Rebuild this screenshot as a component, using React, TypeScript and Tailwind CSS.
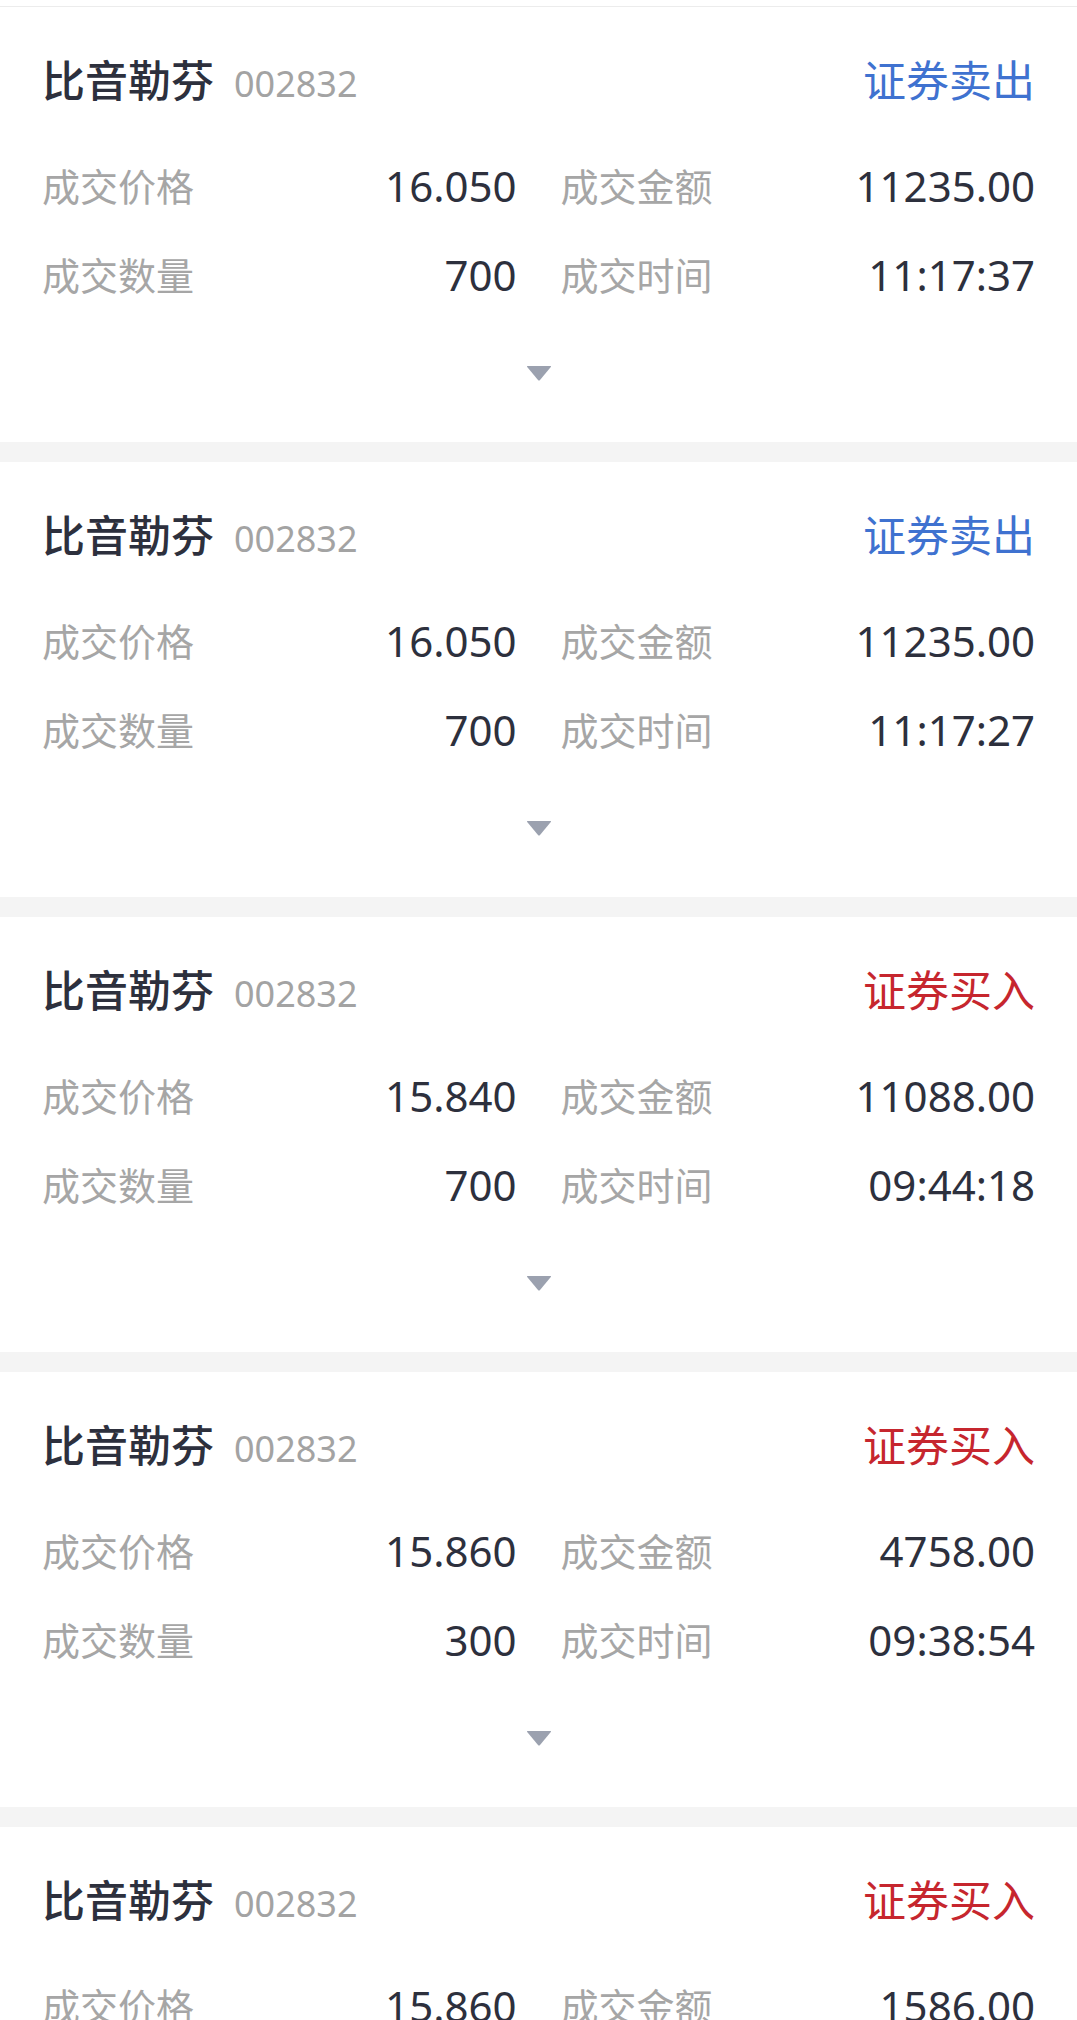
import React from "react";

type Trade = {
  name: string;
  code: string;
  side: "sell" | "buy";
  price: string;
  amount: string;
  qty: string;
  time: string;
};

const trades: Trade[] = [
  { name: "比音勒芬", code: "002832", side: "sell", price: "16.050", amount: "11235.00", qty: "700", time: "11:17:37" },
  { name: "比音勒芬", code: "002832", side: "sell", price: "16.050", amount: "11235.00", qty: "700", time: "11:17:27" },
  { name: "比音勒芬", code: "002832", side: "buy", price: "15.840", amount: "11088.00", qty: "700", time: "09:44:18" },
  { name: "比音勒芬", code: "002832", side: "buy", price: "15.860", amount: "4758.00", qty: "300", time: "09:38:54" },
  { name: "比音勒芬", code: "002832", side: "buy", price: "15.860", amount: "1586.00", qty: "100", time: "09:38:54" },
];

function Cell({ label, value }: { label: string; value: string }) {
  return (
    <div className="flex items-center justify-between h-[89px]">
      <span className="text-[38px] text-[#a6a6a6]">{label}</span>
      <span className="text-[42px] text-[#2d303d]">{value}</span>
    </div>
  );
}

function TradeCard({ t }: { t: Trade }) {
  return (
    <div className="bg-white px-[42px] pt-[48px] pb-[61px]">
      <div className="flex items-center justify-between h-[50px]">
        <div className="flex items-baseline gap-[20px]">
          <span className="text-[43px] font-medium text-[#2d303d]">{t.name}</span>
          <span className="text-[36px] text-[#a3a3a3]">{t.code}</span>
        </div>
        {t.side === "sell" ? (
          <span className="text-[43px] text-[#3f72d0]">证券卖出</span>
        ) : (
          <span className="text-[43px] text-[#c6262e]">证券买入</span>
        )}
      </div>

      <div className="grid grid-cols-2 gap-x-[44px] mt-[36px]">
        <Cell label="成交价格" value={t.price} />
        <Cell label="成交金额" value={t.amount} />
        <Cell label="成交数量" value={t.qty} />
        <Cell label="成交时间" value={t.time} />
      </div>

      <div className="flex justify-center mt-[46px] h-[16px]">
        <svg width="26" height="16" viewBox="0 0 26 16">
          <path d="M1.5 1 L24.5 1 Q25.5 1 24.8 2 L14 15 Q13 16 12 15 L1.2 2 Q0.5 1 1.5 1 Z" fill="#9ba1af" />
        </svg>
      </div>
    </div>
  );
}

export default function App() {
  return (
    <div
      className="w-[1077px] h-[2020px] overflow-hidden bg-[#f4f4f4] leading-none"
      style={{ fontFamily: '"Noto Sans", "Noto Sans CJK SC", sans-serif' }}
    >
      <div className="h-[6px] bg-white" />
      <div className="h-[1px] bg-[#ececec]" />
      <div className="flex flex-col gap-[20px]">
        {trades.map((t, i) => (
          <TradeCard key={i} t={t} />
        ))}
      </div>
    </div>
  );
}
